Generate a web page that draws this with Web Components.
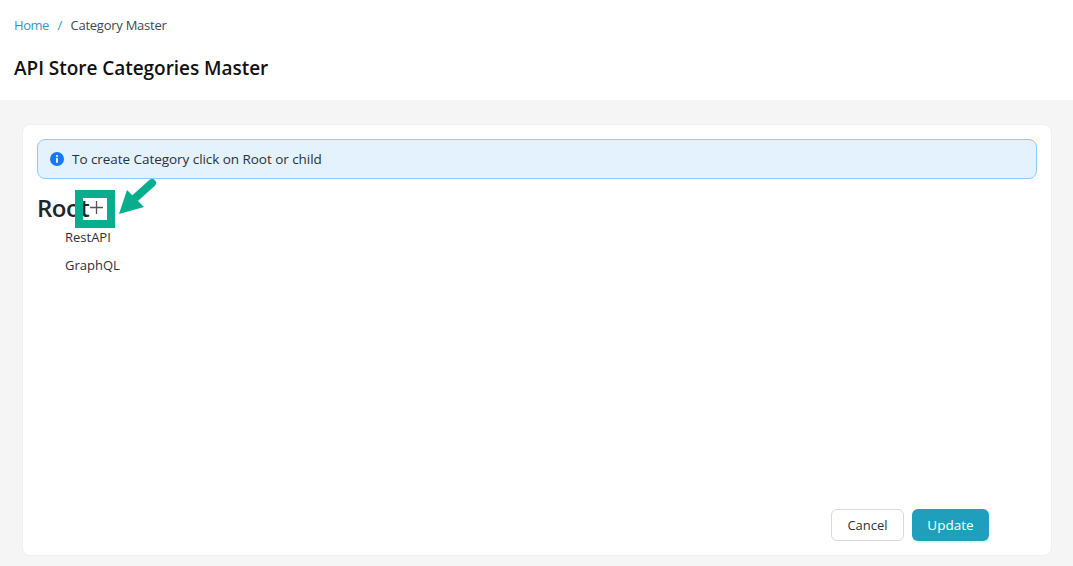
<!DOCTYPE html>
<html>
<head>
<meta charset="utf-8">
<title>API Store Categories Master</title>
<style>
html, body { margin: 0; height: 100%; }
body { background: #f5f5f5; font-family: "Open Sans", "Noto Sans", sans-serif; color: #212529; }
</style>
</head>
<body>
<page-header title="API Store Categories Master" current="Category Master"></page-header>
<category-card>
	<info-alert>To create Category click on Root or child</info-alert>
	<category-tree></category-tree>
	<form-actions slot="actions"></form-actions>
</category-card>

<script>
class PageHeader extends HTMLElement {
	constructor() {
		super()
		const root = this.attachShadow({mode: 'open'})
		root.innerHTML = `<style>
			:host { display: block; background: #fff; height: 100px; box-sizing: border-box; padding: 15px 14px 0; }
			nav { display: flex; align-items: center; height: 20px; font-size: 13px; letter-spacing: -.25px; color: #3f4650; }
			a { color: #2d9cba; text-decoration: none; letter-spacing: -.45px; }
			.sep { color: #2d9cba; margin: 0 8.5px; }
			h1 { margin: 20px 0 0; font-size: 19px; line-height: 26px; font-weight: 600; color: #111; letter-spacing: -.04px; }
		</style>
		<nav><a href="#">Home</a><span class="sep">/</span><span>${this.getAttribute('current')}</span></nav>
		<h1>${this.getAttribute('title')}</h1>`
	}
}

class CategoryCard extends HTMLElement {
	constructor() {
		super()
		const root = this.attachShadow({mode: 'open'})
		root.innerHTML = `<style>
			:host { display: flex; flex-direction: column; box-sizing: border-box; margin: 24px 21px 0 22px; height: 432px; padding: 14px; background: #fff; border: 1px solid #f0f0f0; border-radius: 8px; }
			.body { flex: 1; }
			.foot { display: flex; justify-content: flex-end; padding: 0 48px 0 0; }
		</style>
		<div class="body"><slot></slot></div>
		<div class="foot"><slot name="actions"></slot></div>`
	}
}

class InfoAlert extends HTMLElement {
	constructor() {
		super()
		const root = this.attachShadow({mode: 'open'})
		root.innerHTML = `<style>
			:host { display: flex; align-items: center; gap: 8px; box-sizing: border-box; height: 40px; padding: 0 12px; background: #e3f2fd; border: 1px solid #90caf9; border-radius: 8px; font-size: 13.5px; letter-spacing: -.05px; color: #2b3138; }
			svg { flex: none; }
		</style>
		<svg width="14" height="14" viewBox="0 0 14 14">
			<circle cx="7" cy="7" r="7" fill="#1677ff"/>
			<circle cx="7" cy="3.9" r="1" fill="#fff"/>
			<rect x="6.1" y="5.8" width="1.8" height="5" rx=".4" fill="#fff"/>
		</svg>
		<span><slot></slot></span>`
	}
}

class CategoryTree extends HTMLElement {
	constructor() {
		super()
		const root = this.attachShadow({mode: 'open'})
		root.innerHTML = `<style>
			:host { display: block; position: relative; padding-top: 13px; }
			.root { display: flex; align-items: center; height: 31px; font-size: 24px; font-weight: 600; color: #212529; letter-spacing: -.5px; }
			.add { margin-left: 1px; width: 13px; height: 13px; flex: none; }
			ul { list-style: none; margin: 0; padding: 0 0 0 28px; font-size: 13px; color: #2b3138; }
			li { height: 28px; line-height: 28px; }
			.mark { position: absolute; left: 0; top: 0; pointer-events: none; }
		</style>
		<div class="root"><span>Root</span>
			<svg class="add" viewBox="0 0 13 13"><path d="M6.5 0v13M0 6.5h13" stroke="#555" stroke-width="1.3" fill="none"/></svg>
		</div>
		<ul><li>RestAPI</li><li>GraphQL</li></ul>
		<svg class="mark" width="130" height="60" viewBox="0 0 130 60">
			<rect x="42" y="15" width="32" height="30" fill="none" stroke="#06ae8e" stroke-width="8"/>
			<path d="M115 4L96 21" stroke="#06ae8e" stroke-width="8" stroke-linecap="round" fill="none"/>
			<path d="M82 35L90 11L107 28Z" fill="#06ae8e"/>
		</svg>`
	}
}

class FormActions extends HTMLElement {
	constructor() {
		super()
		const root = this.attachShadow({mode: 'open'})
		root.innerHTML = `<style>
			:host { display: flex; gap: 8px; }
			button { box-sizing: border-box; height: 32px; border-radius: 6px; font: inherit; font-size: 13px; padding: 0; }
			.cancel { width: 73px; background: #fff; border: 1px solid #d9d9d9; color: #2b3138; }
			.update { width: 77px; background: #209fbd; border: 0; color: #fff; font-size: 13.5px; box-shadow: 0 2px 0 rgba(5,145,255,.1); }
		</style>
		<button class="cancel">Cancel</button><button class="update">Update</button>`
	}
}

customElements.define('page-header', PageHeader)
customElements.define('category-card', CategoryCard)
customElements.define('info-alert', InfoAlert)
customElements.define('category-tree', CategoryTree)
customElements.define('form-actions', FormActions)
</script>
</body>
</html>
